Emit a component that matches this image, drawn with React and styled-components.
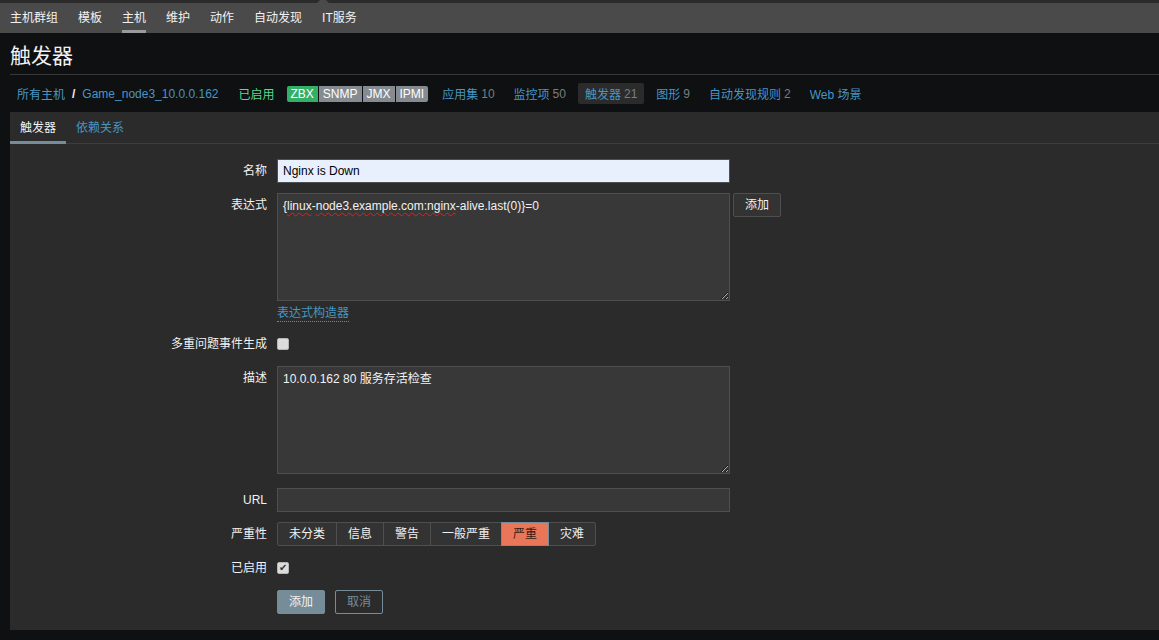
import React from "react";
import styled, { createGlobalStyle, css } from "styled-components";

const GlobalStyle = createGlobalStyle`
  html, body { margin: 0; padding: 0; }
  body {
    background: #0e1012;
    color: #f2f2f2;
    font-family: "Liberation Sans", Arial, "Noto Sans CJK SC", sans-serif;
    font-size: 12px;
  }
  * { box-sizing: border-box; }
`;

const Page = styled.div`
  min-height: 640px;
  background: #0e1012;
  padding-bottom: 10px;
`;

const TopStrip = styled.div`
  position: relative;
  height: 3px;
  background: #2b2b2b;
  overflow: hidden;
`;

const Notch = styled.span`
  position: absolute;
  left: 317px;
  top: -3px;
  width: 0;
  height: 0;
  border-left: 6px solid transparent;
  border-right: 6px solid transparent;
  border-bottom: 6px solid #4a4a4a;
`;

const SubNav = styled.nav`
  display: flex;
  height: 30px;
  background: #4a4a4a;
`;

const NavItem = styled.a`
  position: relative;
  display: flex;
  align-items: center;
  padding: 0 10px;
  color: #f2f2f2;
  line-height: 30px;
  text-decoration: none;
  ${(p) =>
    p.$active &&
    css`
      &::after {
        content: "";
        position: absolute;
        left: 10px;
        right: 10px;
        bottom: 0;
        height: 3px;
        background: #9a9a9a;
      }
    `}
`;

const Header = styled.header`
  background: #0e1012;
`;

const TitleBar = styled.div`
  margin-left: 10px;
  padding: 11px 0 6px;
  border-bottom: 1px solid #383838;
`;

const Title = styled.h1`
  margin: 0;
  font-size: 21px;
  line-height: 24px;
  font-weight: normal;
  color: #f2f2f2;
`;

const Breadcrumbs = styled.div`
  display: flex;
  align-items: center;
  height: 37px;
  margin-left: 10px;
  padding-left: 7px;
`;

const Link = styled.a`
  color: #4796c4;
  text-decoration: none;
  white-space: nowrap;
`;

const Separator = styled.span`
  margin: 0 7px 0 7px;
  color: #f2f2f2;
  font-weight: bold;
`;

const StatusText = styled.span`
  margin-left: 20px;
  color: #59db8f;
`;

const TagGroup = styled.div`
  display: flex;
  gap: 1px;
  margin-left: 12px;
  border-radius: 2px;
  overflow: hidden;
`;

const Tag = styled.span`
  height: 16px;
  line-height: 16px;
  padding: 0 4px;
  color: #ffffff;
  background: ${(p) => (p.$on ? "#34af67" : "#858b90")};
`;

const HostNav = styled.div`
  display: flex;
  align-items: center;
  gap: 5px;
  margin-left: 7px;
`;

const HostNavItem = styled.span`
  display: flex;
  align-items: center;
  height: 21px;
  padding: 0 7px;
  border-radius: 2px;
  background: ${(p) => (p.$active ? "#2b2b2b" : "transparent")};
  white-space: nowrap;
`;

const Count = styled.span`
  margin-left: 3px;
  color: #7d7d7d;
`;

const TabsPanel = styled.section`
  margin-left: 10px;
  background: #2b2b2b;
`;

const TabNav = styled.div`
  display: flex;
  height: 32px;
  border-bottom: 1px solid #3d3d3d;
`;

const Tab = styled.a`
  display: flex;
  align-items: center;
  height: 32px;
  margin-bottom: -1px;
  padding: 0 10px;
  text-decoration: none;
  color: ${(p) => (p.$active ? "#f2f2f2" : "#4796c4")};
  border-bottom: 3px solid ${(p) => (p.$active ? "#768d99" : "transparent")};
`;

const Form = styled.form`
  display: flex;
  flex-direction: column;
  gap: 10px;
  padding: 15px 0 16px;
`;

const Row = styled.div`
  display: grid;
  grid-template-columns: 257px 1fr;
  column-gap: 10px;
  margin-bottom: ${(p) => p.$extra || 0}px;
`;

const Label = styled.label`
  text-align: right;
  line-height: 24px;
  color: #f2f2f2;
  white-space: nowrap;
`;

const Field = styled.div`
  display: flex;
  align-items: flex-start;
  gap: 3px;
  min-height: 24px;
`;

const Column = styled.div`
  display: flex;
  flex-direction: column;
  align-items: flex-start;
`;

const inputBase = css`
  width: 453px;
  border: 1px solid #4f4f4f;
  background: #383838;
  color: #f2f2f2;
  font-family: "Liberation Sans", Arial, "Noto Sans CJK SC", sans-serif;
  font-size: 12px;
  outline: none;
`;

const TextInput = styled.input`
  ${inputBase};
  height: 24px;
  padding: 0 5px;
  background: ${(p) => (p.$autofill ? "#e8f0fe" : "#383838")};
  color: ${(p) => (p.$autofill ? "#000000" : "#f2f2f2")};
`;

const TextBox = styled.div`
  ${inputBase};
  height: 108px;
  padding: 4px 5px;
  line-height: 16px;
  overflow: auto;
  resize: vertical;
  white-space: pre-wrap;
`;

const Misspelled = styled.span`
  text-decoration: underline wavy #e02020;
  text-decoration-thickness: 1px;
  text-underline-offset: 2px;
`;

const BuilderLink = styled.a`
  margin-top: 5px;
  line-height: 15px;
  color: #4796c4;
  text-decoration: none;
  border-bottom: 1px dotted #4796c4;
`;

const Button = styled.button`
  height: 24px;
  padding: 0 11px;
  border-radius: 2px;
  font-family: "Liberation Sans", Arial, "Noto Sans CJK SC", sans-serif;
  font-size: 12px;
  line-height: 22px;
  cursor: pointer;
  ${(p) =>
    p.$variant === "primary"
      ? css`
          background: #768d99;
          border: 1px solid #768d99;
          color: #f2f2f2;
        `
      : p.$variant === "alt"
      ? css`
          background: transparent;
          border: 1px solid #768d99;
          color: #768d99;
        `
      : css`
          background: #333333;
          border: 1px solid #4f4f4f;
          color: #f2f2f2;
        `}
`;

const CheckCell = styled.div`
  display: flex;
  align-items: center;
  height: 24px;
`;

const Checkbox = styled.span`
  display: flex;
  align-items: center;
  justify-content: center;
  width: 12px;
  height: 12px;
  border: 1px solid #b5b5b5;
  border-radius: 2px;
  background: #dcdcdc;
  color: #333333;
  font-size: 10px;
  line-height: 1;
`;

const Segmented = styled.div`
  display: flex;
`;

const Segment = styled.span`
  height: 24px;
  padding: 0 11px;
  margin-left: -1px;
  line-height: 22px;
  border: 1px solid ${(p) => (p.$checked ? "#768d99" : "#4f4f4f")};
  background: ${(p) => (p.$checked ? "#e97659" : "#333333")};
  color: ${(p) => (p.$checked ? "#3a1a10" : "#f2f2f2")};
  position: relative;
  z-index: ${(p) => (p.$checked ? 1 : 0)};
  &:first-child {
    margin-left: 0;
    border-radius: 2px 0 0 2px;
  }
  &:last-child {
    border-radius: 0 2px 2px 0;
  }
`;

const ButtonRow = styled.div`
  display: flex;
  gap: 10px;
`;

const topNav = ["主机群组", "模板", "主机", "维护", "动作", "自动发现", "IT服务"];
const hostLinks = [
  { label: "应用集", count: "10" },
  { label: "监控项", count: "50" },
  { label: "触发器", count: "21", active: true },
  { label: "图形", count: "9" },
  { label: "自动发现规则", count: "2" },
  { label: "Web 场景" },
];
const severities = ["未分类", "信息", "警告", "一般严重", "严重", "灾难"];

export default function App() {
  return (
    <Page>
      <GlobalStyle />
      <TopStrip>
        <Notch />
      </TopStrip>
      <SubNav>
        {topNav.map((n) => (
          <NavItem key={n} $active={n === "主机"}>
            {n}
          </NavItem>
        ))}
      </SubNav>
      <Header>
        <TitleBar>
          <Title>触发器</Title>
        </TitleBar>
        <Breadcrumbs>
          <Link>所有主机</Link>
          <Separator>/</Separator>
          <Link>Game_node3_10.0.0.162</Link>
          <StatusText>已启用</StatusText>
          <TagGroup>
            <Tag $on>ZBX</Tag>
            <Tag>SNMP</Tag>
            <Tag>JMX</Tag>
            <Tag>IPMI</Tag>
          </TagGroup>
          <HostNav>
            {hostLinks.map((h) => (
              <HostNavItem key={h.label} $active={h.active}>
                <Link>{h.label}</Link>
                {h.count && <Count>{h.count}</Count>}
              </HostNavItem>
            ))}
          </HostNav>
        </Breadcrumbs>
      </Header>
      <TabsPanel>
        <TabNav>
          <Tab $active>触发器</Tab>
          <Tab>依赖关系</Tab>
        </TabNav>
        <Form onSubmit={(e) => e.preventDefault()}>
          <Row>
            <Label>名称</Label>
            <Field>
              <TextInput $autofill defaultValue="Nginx is Down" />
            </Field>
          </Row>
          <Row>
            <Label>表达式</Label>
            <Field>
              <Column>
                <TextBox>
                  {"{"}
                  <Misspelled>linux</Misspelled>-
                  <Misspelled>node3.example.com:nginx</Misspelled>
                  {"-alive.last(0)}=0"}
                </TextBox>
                <BuilderLink>表达式构造器</BuilderLink>
              </Column>
              <Button type="button">添加</Button>
            </Field>
          </Row>
          <Row>
            <Label>多重问题事件生成</Label>
            <CheckCell>
              <Checkbox />
            </CheckCell>
          </Row>
          <Row $extra={4}>
            <Label>描述</Label>
            <Field>
              <TextBox>10.0.0.162 80 服务存活检查</TextBox>
            </Field>
          </Row>
          <Row>
            <Label>URL</Label>
            <Field>
              <TextInput defaultValue="" />
            </Field>
          </Row>
          <Row>
            <Label>严重性</Label>
            <Field>
              <Segmented>
                {severities.map((s) => (
                  <Segment key={s} $checked={s === "严重"}>
                    {s}
                  </Segment>
                ))}
              </Segmented>
            </Field>
          </Row>
          <Row>
            <Label>已启用</Label>
            <CheckCell>
              <Checkbox>✔</Checkbox>
            </CheckCell>
          </Row>
          <Row>
            <span />
            <ButtonRow>
              <Button type="button" $variant="primary">
                添加
              </Button>
              <Button type="button" $variant="alt">
                取消
              </Button>
            </ButtonRow>
          </Row>
        </Form>
      </TabsPanel>
    </Page>
  );
}
